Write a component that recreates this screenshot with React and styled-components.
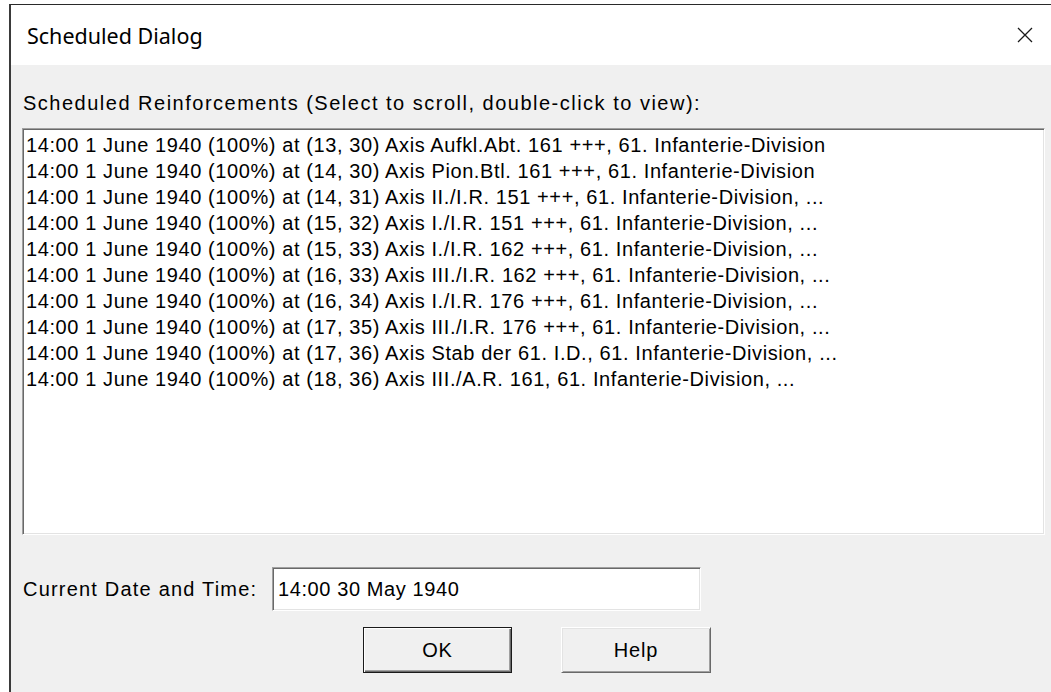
import React from 'react';
import styled, { createGlobalStyle } from 'styled-components';

const GlobalStyle = createGlobalStyle`
  html, body {
    margin: 0;
    background: #ffffff;
    overflow: hidden;
  }
`;

const Window = styled.div`
  margin: 4px 0 0 9px;
  width: 1060px;
  height: 700px;
  border-top: 1px solid #2a2a2a;
  border-left: 2px solid #3a3a3a;
  background: #f0f0f0;
  display: flex;
  flex-direction: column;
  font-family: "Liberation Sans", Arial, sans-serif;
  color: #000;
`;

const TitleBar = styled.div`
  height: 60px;
  width: 1040px;
  box-sizing: border-box;
  background: #ffffff;
  display: flex;
  align-items: center;
  justify-content: space-between;
  padding: 0 16px 0 16px;
`;

const Title = styled.span`
  font-family: "Noto Sans", "Open Sans", sans-serif;
  font-size: 21.5px;
  color: #000;
`;

const CloseButton = styled.div`
  width: 20px;
  height: 20px;
  display: flex;
  align-items: center;
  justify-content: center;
`;

const Body = styled.div`
  padding: 25px 0 0 11px;
  display: flex;
  flex-direction: column;
`;

// dialog text: wide, loosely spaced system sans
const Caption = styled.div`
  font-size: 20px;
  letter-spacing: 1.5px;
  line-height: 26px;
  height: 26px;
  margin: 0 0 12px 1px;
  white-space: nowrap;
`;

const sunken = `
  border-top: 1px solid #a0a0a0;
  border-left: 1px solid #a0a0a0;
  border-right: 1px solid #ffffff;
  border-bottom: 1px solid #ffffff;
  box-shadow: inset 1px 1px 0 #696969, inset -1px -1px 0 #e3e3e3;
  background: #ffffff;
  box-sizing: border-box;
`;

const ListBox = styled.div`
  ${sunken}
  width: 1023px;
  height: 407px;
  padding: 3px 3px;
`;

const ListRow = styled.div`
  font-size: 20px;
  letter-spacing: 0.6px;
  line-height: 26px;
  white-space: nowrap;
`;

const FieldRow = styled.div`
  display: flex;
  align-items: center;
  margin-top: 32px;
`;

const FieldLabel = styled.label`
  font-size: 20px;
  letter-spacing: 1.2px;
  width: 249px;
  padding-left: 1px;
  white-space: nowrap;
`;

const TextField = styled.div`
  ${sunken}
  width: 429px;
  height: 44px;
  padding: 0 5px;
  display: flex;
  align-items: center;
  font-size: 20px;
  letter-spacing: 0.6px;
`;

const ButtonRow = styled.div`
  display: flex;
  gap: 49px;
  margin: 16px 0 0 341px;
`;

const Button = styled.div`
  width: ${p => (p.$default ? 149 : 150)}px;
  height: 46px;
  box-sizing: border-box;
  display: flex;
  align-items: center;
  justify-content: center;
  font-size: 20px;
  letter-spacing: 0.8px;
  background: #f0f0f0;
  border-top: 1px solid ${p => (p.$default ? '#1a1a1a' : '#ffffff')};
  border-left: 1px solid ${p => (p.$default ? '#1a1a1a' : '#ffffff')};
  border-right: 1px solid ${p => (p.$default ? '#1a1a1a' : '#696969')};
  border-bottom: 1px solid ${p => (p.$default ? '#1a1a1a' : '#696969')};
  box-shadow: ${p =>
    p.$default
      ? 'inset 1px 1px 0 #ffffff, inset -1px -1px 0 #696969, inset -2px -2px 0 #a0a0a0'
      : 'inset 1px 1px 0 #e3e3e3, inset -1px -1px 0 #a0a0a0'};
`;

const rows = [
  '14:00 1 June 1940 (100%) at (13, 30) Axis Aufkl.Abt. 161 +++, 61. Infanterie-Division',
  '14:00 1 June 1940 (100%) at (14, 30) Axis Pion.Btl. 161 +++, 61. Infanterie-Division',
  '14:00 1 June 1940 (100%) at (14, 31) Axis II./I.R. 151 +++, 61. Infanterie-Division, ...',
  '14:00 1 June 1940 (100%) at (15, 32) Axis I./I.R. 151 +++, 61. Infanterie-Division, ...',
  '14:00 1 June 1940 (100%) at (15, 33) Axis I./I.R. 162 +++, 61. Infanterie-Division, ...',
  '14:00 1 June 1940 (100%) at (16, 33) Axis III./I.R. 162 +++, 61. Infanterie-Division, ...',
  '14:00 1 June 1940 (100%) at (16, 34) Axis I./I.R. 176 +++, 61. Infanterie-Division, ...',
  '14:00 1 June 1940 (100%) at (17, 35) Axis III./I.R. 176 +++, 61. Infanterie-Division, ...',
  '14:00 1 June 1940 (100%) at (17, 36) Axis Stab der 61. I.D., 61. Infanterie-Division, ...',
  '14:00 1 June 1940 (100%) at (18, 36) Axis III./A.R. 161, 61. Infanterie-Division, ...',
];

export default function App() {
  return (
    <>
      <GlobalStyle />
      <Window>
        <TitleBar>
          <Title>Scheduled Dialog</Title>
          <CloseButton>
            <svg width="16" height="16" viewBox="0 0 16 16">
              <path d="M1 1 L15 15 M15 1 L1 15" stroke="#1a1a1a" strokeWidth="1.3" />
            </svg>
          </CloseButton>
        </TitleBar>
        <Body>
          <Caption>Scheduled Reinforcements (Select to scroll, double-click to view):</Caption>
          <ListBox>
            {rows.map((r, i) => (
              <ListRow key={i}>{r}</ListRow>
            ))}
          </ListBox>
          <FieldRow>
            <FieldLabel>Current Date and Time:</FieldLabel>
            <TextField>14:00 30 May 1940</TextField>
          </FieldRow>
          <ButtonRow>
            <Button $default>OK</Button>
            <Button>Help</Button>
          </ButtonRow>
        </Body>
      </Window>
    </>
  );
}
